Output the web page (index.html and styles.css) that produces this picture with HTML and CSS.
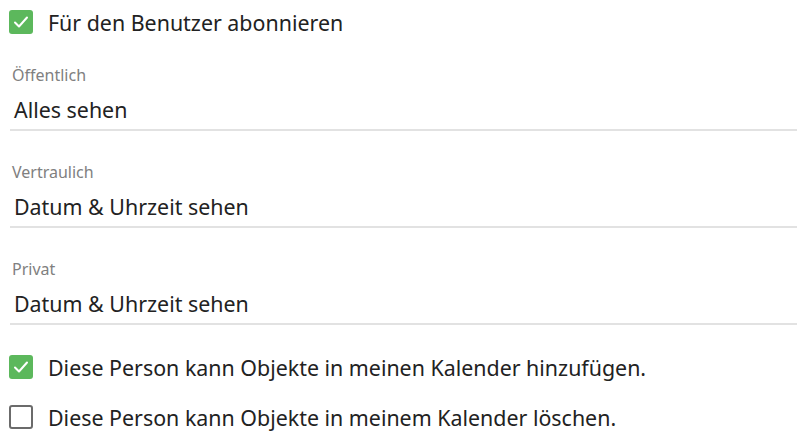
FILE: index.html
```html
<!DOCTYPE html>
<html lang="de">
<head>
    <meta charset="UTF-8">
    <meta name="viewport" content="width=device-width, initial-scale=1.0">
    <title>Freigabe</title>
    <link rel="stylesheet" href="styles.css">
</head>
<body>
    <div class="panel">
        <div class="check-row first">
            <span class="box checked">
                <svg viewBox="0 0 24 24" width="24" height="24"><path d="M6 12.5l4 4 8-9" fill="none" stroke="#fff" stroke-width="2" stroke-linecap="round" stroke-linejoin="round"/></svg>
            </span>
            <span class="check-text">Für den Benutzer abonnieren</span>
        </div>

        <div class="field first-field">
            <div class="field-label">Öffentlich</div>
            <div class="field-value">Alles sehen</div>
        </div>

        <div class="field">
            <div class="field-label">Vertraulich</div>
            <div class="field-value">Datum &amp; Uhrzeit sehen</div>
        </div>

        <div class="field">
            <div class="field-label">Privat</div>
            <div class="field-value">Datum &amp; Uhrzeit sehen</div>
        </div>

        <div class="check-row after-fields">
            <span class="box checked">
                <svg viewBox="0 0 24 24" width="24" height="24"><path d="M6 12.5l4 4 8-9" fill="none" stroke="#fff" stroke-width="2" stroke-linecap="round" stroke-linejoin="round"/></svg>
            </span>
            <span class="check-text">Diese Person kann Objekte in meinen Kalender hinzufügen.</span>
        </div>
        <div class="check-row">
            <span class="box"></span>
            <span class="check-text">Diese Person kann Objekte in meinem Kalender löschen.</span>
        </div>
    </div>
</body>
</html>
```

FILE: styles.css
```css
body {
    margin: 0;
    background: #fff;
    font-family: "Noto Sans", "Open Sans", sans-serif;
    color: #222;
}

.panel {
    padding: 0 6px 0 9px;
}

.check-row {
    display: flex;
    align-items: center;
    gap: 15px;
    height: 50px;
}

.check-row.first {
    height: 44px;
}

.check-row.after-fields {
    margin-top: 17px;
}

.box {
    box-sizing: border-box;
    width: 24px;
    height: 24px;
    border-radius: 3px;
    border: 2px solid #6b6b6b;
    background: #fff;
    flex: none;
}

.box.checked {
    border: none;
    background: #5cb85c;
}

.box svg {
    display: block;
}

.check-text {
    font-size: 21.4px;
}

.field {
    margin-top: 31px;
    margin-left: 1px;
    border-bottom: 2px solid #e2e2e2;
    padding-bottom: 4px;
}

.field.first-field {
    margin-top: 21px;
}

.field-label {
    font-size: 16px;
    line-height: 20px;
    color: #808080;
    padding-left: 2px;
}

.field-value {
    font-size: 21.4px;
    line-height: 30px;
    margin-top: 10px;
    padding-left: 4px;
}
```
